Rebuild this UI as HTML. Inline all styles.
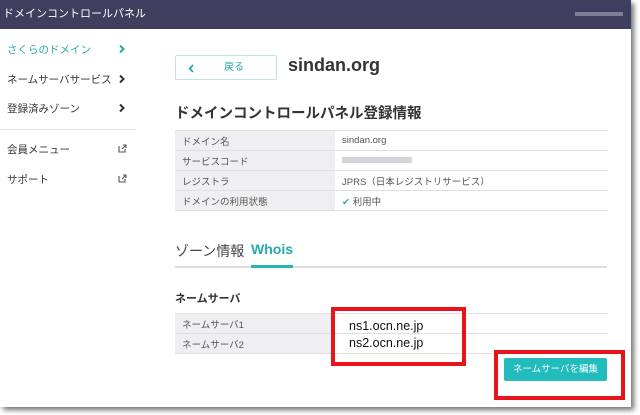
<!DOCTYPE html>
<html><head><meta charset="utf-8"><style>
*{margin:0;padding:0;box-sizing:border-box}
body{width:640px;height:415px;background:#fff;font-family:"Liberation Sans","Noto Sans CJK JP",sans-serif;position:relative;overflow:hidden;color:#333}
.shadow{position:absolute;left:0;top:0;width:631px;height:407px;box-shadow:3px 3px 5px rgba(0,0,0,.55);background:#fff}
.hdr{position:absolute;left:0;top:0;width:631px;height:29px;background:#3f3e5e;color:#fff;font-size:11px;line-height:29px;padding-left:3px}
.hdr .u{position:absolute;right:8px;top:12px;width:48px;height:4px;background:#9a99aa;opacity:.7}
.si{position:absolute;left:7px;font-size:10.5px;color:#333;width:125px;height:14px}
.si svg{position:absolute;left:111px;top:2px}
.sep{position:absolute;left:0;top:129px;width:136px;height:1px;background:#e4e4e4}
.abs{position:absolute}
table{border-collapse:collapse;position:absolute;left:175px;width:432px;font-size:9.5px}
td{height:20px;border-top:1px solid #e0e0e0;border-bottom:1px solid #e0e0e0;padding-left:7px;color:#555}
td.l{background:#efeff1;width:160px}
.red{position:absolute;border:4px solid #e8141a}
</style></head><body>
<div class="shadow"></div>
<div class="hdr">ドメインコントロールパネル<div class="u"></div></div>
<div class="si" style="top:42px;color:#2aa9a9">さくらのドメイン<svg width="8" height="10" viewBox="0 0 8 10"><path d="M2 1.5L5.5 5L2 8.5" stroke="#2aa9a9" stroke-width="2" fill="none"/></svg></div>
<div class="si" style="top:72px">ネームサーバサービス<svg width="8" height="10" viewBox="0 0 8 10"><path d="M2 1.5L5.5 5L2 8.5" stroke="#333" stroke-width="2" fill="none"/></svg></div>
<div class="si" style="top:101px">登録済みゾーン<svg width="8" height="10" viewBox="0 0 8 10"><path d="M2 1.5L5.5 5L2 8.5" stroke="#333" stroke-width="2" fill="none"/></svg></div>
<div class="sep"></div>
<div class="si" style="top:142px">会員メニュー<svg width="9" height="9" viewBox="0 0 9 9"><path d="M1 2V8H7V5M4 5L8 1M5 1H8V4" stroke="#555" stroke-width="1.1" fill="none"/></svg></div>
<div class="si" style="top:172px">サポート<svg width="9" height="9" viewBox="0 0 9 9"><path d="M1 2V8H7V5M4 5L8 1M5 1H8V4" stroke="#555" stroke-width="1.1" fill="none"/></svg></div>
<div class="abs" style="left:175px;top:55px;width:102px;height:25px;border:1px solid #bfe3e3;border-radius:2px;font-size:10px;color:#2aa9a9;line-height:23px"><svg style="position:absolute;left:12px;top:8px" width="7" height="9" viewBox="0 0 7 9"><path d="M5 1L1.8 4.5L5 8" stroke="#2aa9a9" stroke-width="1.8" fill="none"/></svg><span style="position:absolute;left:48px">戻る</span></div>
<div class="abs" style="left:288px;top:55px;font-size:18px;font-weight:bold;color:#333">sindan.org</div>
<div class="abs" style="left:175px;top:102px;font-size:14.5px;font-weight:bold;color:#333">ドメインコントロールパネル登録情報</div>
<table style="top:130px">
<tr><td class="l">ドメイン名</td><td>sindan.org</td></tr>
<tr><td class="l">サービスコード</td><td><span style="display:inline-block;width:70px;height:6px;background:#d5d5de"></span></td></tr>
<tr><td class="l">レジストラ</td><td>JPRS（日本レジストリサービス）</td></tr>
<tr><td class="l">ドメインの利用状態</td><td><span style="color:#2aa9a9">✔</span> 利用中</td></tr>
</table>
<div class="abs" style="left:175px;top:241px;font-size:14px;color:#444">ゾーン情報</div>
<div class="abs" style="left:251px;top:241px;font-size:14px;font-weight:bold;color:#2aa9a9">Whois</div>
<div class="abs" style="left:175px;top:266px;width:432px;height:2px;background:#ddd"></div>
<div class="abs" style="left:251px;top:265px;width:42px;height:3px;background:#2ab5b5"></div>
<div class="abs" style="left:175px;top:290px;font-size:11px;font-weight:bold;color:#333">ネームサーバ</div>
<table style="top:313px">
<tr><td class="l" style="width:158px">ネームサーバ1</td><td></td></tr>
<tr><td class="l" style="width:158px">ネームサーバ2</td><td></td></tr>
</table>
<div class="abs" style="left:349px;top:318px;font-size:12.5px;color:#111;line-height:17px;font-family:'Liberation Sans Narrow','Liberation Sans',sans-serif">ns1.ocn.ne.jp<br>ns2.ocn.ne.jp</div>
<div class="abs" style="left:504px;top:358px;width:103px;height:23px;background:#22bcbc;border-radius:2px;color:#fff;font-size:9.5px;text-align:center;line-height:23px">ネームサーバを編集</div>
<div class="red" style="left:331px;top:307px;width:135px;height:59px"></div>
<div class="red" style="left:494px;top:350px;width:131px;height:50px"></div>
</body></html>
